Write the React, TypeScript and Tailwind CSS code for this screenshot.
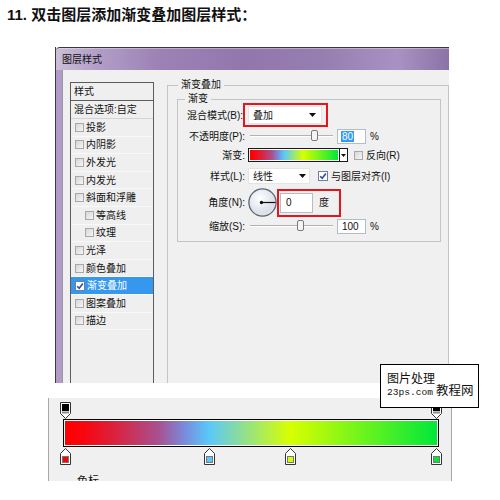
import React from 'react'

const ui = "font-['Liberation_Sans','Noto_Sans_CJK_SC',sans-serif]"
const grad =
    'bg-[linear-gradient(to_right,#ff0000_0%,#f8060e_5%,#d42848_15%,#a8508e_25%,#7a8ada_32%,#5ac8fa_38.7%,#d8ff00_60.5%,#00e83a_100%)]'

const layers = [
    { t: '投影' },
    { t: '内阴影' },
    { t: '外发光' },
    { t: '内发光' },
    { t: '斜面和浮雕' },
    { t: '等高线', sub: true },
    { t: '纹理', sub: true },
    { t: '光泽' },
    { t: '颜色叠加' },
    { t: '渐变叠加', active: true },
    { t: '图案叠加' },
    { t: '描边' },
]

const Arrow = () => (
    <svg width="7" height="4" viewBox="0 0 7 4">
        <path d="M0 0h7L3.5 4z" fill="#111" />
    </svg>
)

const Box = ({ checked }: { checked?: boolean }) =>
    checked ? (
        <svg width="10" height="10" viewBox="0 0 10 10" className="shrink-0">
            <rect x="0.5" y="0.5" width="9" height="9" fill="#fff" stroke="#6f7f99" />
            <path d="M2.2 5.2 4.2 7.3 7.9 2.6" fill="none" stroke="#2a4f9e" strokeWidth="1.6" />
        </svg>
    ) : (
        <div className="w-[9px] h-[9px] shrink-0 border border-[#a8a8a8] bg-[linear-gradient(135deg,#d6d6d6,#f6f6f6)]" />
    )

const Slider = ({ at }: { at: number }) => (
    <div className="relative ml-[5px] w-[83px] h-[12px]">
        <div className="absolute left-0 right-0 top-[5px] h-[2px] bg-[#b3b3b3] border-b border-white" />
        <div
            className={`absolute top-0 w-[7px] h-[11px] rounded-[2px] border border-[#7a7a7a] bg-[#f5f5f5] ${at === 61 ? 'left-[61px]' : 'left-[47px]'}`}
        />
    </div>
)

const ColorStop = ({ color, left }: { color: string; left: string }) => (
    <svg width="11" height="17" viewBox="0 0 11 17" className={`absolute top-0 ${left}`}>
        <path d="M5.5 0.5 10.5 5.5V16.5H0.5V5.5Z" fill="#fff" stroke="#333" />
        <rect x="2.5" y="8.5" width="6" height="6" fill={color} stroke="#777" />
    </svg>
)

const OpacityStop = ({ left }: { left: string }) => (
    <svg width="11" height="17" viewBox="0 0 11 17" className={`absolute top-0 ${left}`}>
        <path d="M0.5 0.5H10.5V11.5L5.5 16.5 0.5 11.5Z" fill="#fff" stroke="#333" />
        <rect x="2" y="2" width="7" height="7" fill="#000" />
        <rect x="2" y="9.5" width="7" height="2" fill="#8a8a8a" />
    </svg>
)

export default function App() {
    return (
        <div className={`relative w-[500px] h-[500px] bg-white overflow-hidden text-[#111] ${ui}`}>
            <h1 className="h-[47px] pt-[5px] pl-[7px] text-[15px] leading-[20px] font-bold text-[#111]">
                11. 双击图层添加渐变叠加图层样式：
            </h1>

            {/* ---- dialog ---- */}
            <div className="ml-[55px] w-[394px] h-[336px] border-l border-[#3c3c3c] flex flex-col">
                <div className="h-[23px] shrink-0 border-t border-[#3a3a3a] rounded-tl-[4px] flex items-center pl-[6px] text-[10px] bg-[linear-gradient(to_right,#cbbfd8_0%,#b39fc8_10%,#9c82b5_26%,#9177ac_48%,#977eb1_68%,#a991c3_87%,#9b83b4_93%,#8c73a7_100%)] shadow-[inset_0_1px_0_rgba(255,255,255,0.35)]">
                    图层样式
                </div>
                <div className="flex flex-1 overflow-hidden">
                    <div className="w-[6px] shrink-0 bg-[#b09bca]" />
                    <div className="flex-1 flex items-start bg-[#f0f0f0] border-l border-[#9a9a9a] pl-[7px] text-[10px] overflow-hidden">
                        {/* ---- list ---- */}
                        <div className="mt-[12px] w-[84px] h-[320px] shrink-0 border border-[#5c5c5c] bg-[#efefef]">
                            <div className="h-[18px] border-b border-[#5c5c5c] pl-[3px] flex items-center">样式</div>
                            <div className="h-[18px] border-b border-[#d4d4d4] pl-[3px] flex items-center">混合选项:自定</div>
                            {layers.map((l) => (
                                <div
                                    key={l.t}
                                    className={`h-[17.6px] flex items-center border-b border-[#f9f9f9] ${l.sub ? 'pl-[14px]' : 'pl-[4px]'} ${l.active ? 'bg-[#3598ee] text-white' : ''}`}
                                >
                                    <Box checked={l.active} />
                                    <span className="ml-[2px]">{l.t}</span>
                                </div>
                            ))}
                        </div>

                        {/* ---- gradient overlay group ---- */}
                        <fieldset className="ml-[13px] mt-[8px] w-[282px] h-[330px] shrink-0 border border-[#c4c4c4]">
                            <legend className="ml-[10px] px-[3px] leading-[14px]">渐变叠加</legend>
                            <fieldset className="ml-[9px] mt-[1px] w-[264px] border border-[#c4c4c4] pb-[7px]">
                                <legend className="ml-[7px] px-[3px] leading-[12px]">渐变</legend>

                                <div className="flex items-center h-[24px] mt-[-2px]">
                                    <span className="w-[65px] text-right shrink-0">混合模式(B):</span>
                                    <div className="w-[85px] h-[24px] border-2 border-[#e8141c] flex items-center pl-[3px]">
                                        <div className="w-[74px] h-[18px] bg-white border border-[#e4e4e4] flex items-center justify-between pl-[4px] pr-[5px]">
                                            叠加
                                            <Arrow />
                                        </div>
                                    </div>
                                </div>

                                <div className="flex items-center h-[16px] mt-[1px]">
                                    <span className="w-[67px] text-right shrink-0">不透明度(P):</span>
                                    <Slider at={61} />
                                    <div className="ml-[4px] w-[29px] h-[15px] bg-white border border-[#b4bcc8] flex items-center">
                                        <span className="ml-[3px] px-[1px] bg-[#3399ff] text-white leading-[11px]">80</span>
                                    </div>
                                    <span className="ml-[4px]">%</span>
                                </div>

                                <div className="flex items-center h-[16px] mt-[3px]">
                                    <span className="w-[67px] text-right shrink-0">渐变:</span>
                                    <div className="ml-[3px] w-[92px] h-[14px] border border-[#1a1a1a] p-[1px] bg-white">
                                        <div className={`w-full h-full ${grad}`} />
                                    </div>
                                    <div className="w-[8px] h-[14px] border border-l-0 border-[#1a1a1a] bg-white flex items-center justify-center">
                                        <svg width="5" height="3" viewBox="0 0 5 3">
                                            <path d="M0 0h5L2.5 3z" fill="#111" />
                                        </svg>
                                    </div>
                                    <div className="ml-[6px]">
                                        <Box />
                                    </div>
                                    <span className="ml-[3px]">反向(R)</span>
                                </div>

                                <div className="flex items-center h-[18px] mt-[4px]">
                                    <span className="w-[67px] text-right shrink-0">样式(L):</span>
                                    <div className="ml-[3px] w-[62px] h-[16px] bg-white border border-[#e4e4e4] flex items-center justify-between pl-[4px] pr-[3px]">
                                        线性
                                        <Arrow />
                                    </div>
                                    <div className="ml-[8px]">
                                        <Box checked />
                                    </div>
                                    <span className="ml-[3px]">与图层对齐(I)</span>
                                </div>

                                <div className="flex items-center h-[29px] mt-[3px]">
                                    <span className="w-[67px] text-right shrink-0">角度(N):</span>
                                    <svg width="29" height="29" viewBox="0 0 29 29" className="ml-[3px] shrink-0">
                                        <defs>
                                            <radialGradient id="dial" cx="40%" cy="35%">
                                                <stop offset="0" stopColor="#ffffff" />
                                                <stop offset="1" stopColor="#dde2ea" />
                                            </radialGradient>
                                        </defs>
                                        <circle cx="14.5" cy="14.5" r="13.6" fill="url(#dial)" stroke="#5d6370" strokeWidth="1.3" />
                                        <line x1="13" y1="14.5" x2="27.5" y2="14.5" stroke="#111" strokeWidth="1.2" />
                                        <circle cx="13.5" cy="14.5" r="1.7" fill="#111" />
                                    </svg>
                                    <div className="w-[64px] h-[28px] border-2 border-[#e8141c] flex items-center pl-[1px]">
                                        <div className="w-[33px] h-[20px] bg-white border border-[#b4bcc8] flex items-center pl-[5px]">0</div>
                                        <span className="ml-[6px]">度</span>
                                    </div>
                                </div>

                                <div className="flex items-center h-[16px] mt-[1px]">
                                    <span className="w-[67px] text-right shrink-0">缩放(S):</span>
                                    <Slider at={47} />
                                    <div className="ml-[4px] w-[29px] h-[15px] bg-white border border-[#b4bcc8] flex items-center pl-[4px]">100</div>
                                    <span className="ml-[4px]">%</span>
                                </div>
                            </fieldset>
                        </fieldset>
                    </div>
                </div>
            </div>

            {/* ---- gradient editor ---- */}
            <div className="mt-[15px] ml-[48px] w-[404px] h-[83px] bg-[#f0f0f0] border-l border-r border-[#a8a8a8] overflow-hidden pt-[4px]">
                <div className="relative ml-[14px] w-[376px] h-[16px]">
                    <OpacityStop left="left-[-3px]" />
                    <OpacityStop left="left-[368px]" />
                </div>
                <div className="mt-[1px] ml-[14px] w-[376px] h-[28px] border border-black p-[1px] bg-white">
                    <div className={`w-full h-full ${grad}`} />
                </div>
                <div className="relative mt-[1px] ml-[14px] w-[376px] h-[17px]">
                    <ColorStop color="#ff0000" left="left-[-3px]" />
                    <ColorStop color="#5ac8fa" left="left-[141px]" />
                    <ColorStop color="#d8ff00" left="left-[222px]" />
                    <ColorStop color="#00e83a" left="left-[368px]" />
                </div>
                <div className="mt-[10px] ml-[28px] text-[11px] leading-[12px]">色标</div>
            </div>

            {/* ---- watermark ---- */}
            <div className="absolute left-[380px] top-[364px] w-[99px] h-[44px] border border-black bg-white flex items-start pl-[6px] pt-[6px] text-[#111] font-['Noto_Sans_CJK_SC',sans-serif]">
                <div className="flex flex-col">
                    <span className="text-[12px] leading-[14px]">图片处理</span>
                    <span className="mt-[3px] text-[9.6px] leading-[10px] font-['Liberation_Mono',monospace]">23ps.com</span>
                </div>
                <span className="ml-[1px] mt-[11px] text-[12.5px] leading-[15px]">教程网</span>
            </div>
        </div>
    )
}
